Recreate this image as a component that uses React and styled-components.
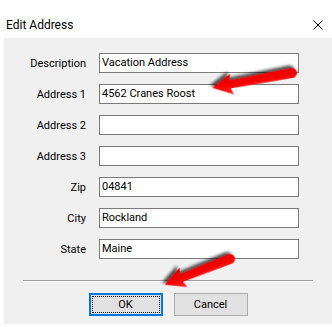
import React from "react"
import styled, { createGlobalStyle } from "styled-components"

const GlobalStyle = createGlobalStyle`
  html, body {
    margin: 0;
    padding: 0;
    background: #ffffff;
  }
  * { box-sizing: border-box; }
`

const fields = [
  { label: "Description", value: "Vacation Address" },
  { label: "Address 1", value: "4562 Cranes Roost" },
  { label: "Address 2", value: "" },
  { label: "Address 3", value: "" },
  { label: "Zip", value: "04841" },
  { label: "City", value: "Rockland" },
  { label: "State", value: "Maine" },
]

function Arrow({ x, y, length, angle, id }) {
  const head = 18
  const half = 10.5
  const shaft = 5
  const body = length - head
  return (
    <g transform={`translate(${x} ${y}) rotate(${angle})`}>
      <g filter={`url(#${id})`}>
        <path
          d={`M 0 ${-shaft} L ${body} ${-shaft + 1} L ${body - 2} ${-half} L ${length} 0 L ${body - 2} ${half} L ${body} ${shaft - 1} L 0 ${shaft} A ${shaft} ${shaft} 0 0 1 0 ${-shaft} Z`}
          fill="url(#redGrad)"
        />
      </g>
    </g>
  )
}

export default function App () {
  return (
    <>
      <GlobalStyle />
      <Window>
        <TitleBar>
          <Title>Edit Address</Title>
          <CloseIcon viewBox="0 0 10 10">
            <path d="M0.5 0.5 L9.5 9.5 M9.5 0.5 L0.5 9.5" stroke="#000" strokeWidth="1" />
          </CloseIcon>
        </TitleBar>
        <Body>
          <Form>
            {fields.map(f => (
              <React.Fragment key={f.label}>
                <Label>{f.label}</Label>
                <Field>{f.value}</Field>
              </React.Fragment>
            ))}
          </Form>
          <Separator />
          <ButtonRow>
            <Button $focused>OK</Button>
            <Button>Cancel</Button>
          </ButtonRow>
        </Body>
        <Overlay viewBox="0 0 332 327">
          <defs>
            <linearGradient id="redGrad" x1="0" y1="0" x2="0" y2="1">
              <stop offset="0" stopColor="#ff2a2a" />
              <stop offset="0.5" stopColor="#f50000" />
              <stop offset="1" stopColor="#d80000" />
            </linearGradient>
            <filter id="shadow1" x="-20%" y="-60%" width="140%" height="220%">
              <feDropShadow dx="2" dy="3" stdDeviation="1.4" floodColor="#000" floodOpacity="0.7" />
            </filter>
            <filter id="shadow2" x="-20%" y="-60%" width="140%" height="220%">
              <feDropShadow dx="2" dy="3" stdDeviation="1.4" floodColor="#000" floodOpacity="0.7" />
            </filter>
          </defs>
          <Arrow id="shadow1" x={292} y={73} length={81} angle={169.5} />
          <Arrow id="shadow2" x={230} y={259} length={70} angle={158.5} />
        </Overlay>
      </Window>
    </>
  )
}

const Window = styled.div`
  position: relative;
  width: 332px;
  height: 327px;
  background: #ffffff;
  font-family: Roboto, "Noto Sans", sans-serif;
  color: #000;
  overflow: hidden;
`

const TitleBar = styled.div`
  height: 38px;
  display: flex;
  align-items: center;
  justify-content: space-between;
  padding: 12px 9px 0 6px;
`

const Title = styled.span`
  font-size: 12px;
`

const CloseIcon = styled.svg`
  width: 10px;
  height: 10px;
  margin-top: -1px;
`

const Body = styled.div`
  margin-left: 4px;
  height: 286px;
  background: #f0f0f0;
  padding-top: 15px;
`

const Form = styled.div`
  display: grid;
  grid-template-columns: 82px 200px;
  grid-auto-rows: 20px;
  column-gap: 13px;
  row-gap: 11px;
`

const Label = styled.div`
  text-align: right;
  font-size: 11px;
  line-height: 21px;
`

const Field = styled.div`
  height: 20px;
  background: #ffffff;
  border: 1px solid #7a7a7a;
  padding: 0 2px;
  font-size: 11px;
  line-height: 18px;
  white-space: nowrap;
`

const Separator = styled.div`
  margin: 21px 19px 0 19px;
  height: 2px;
  border-top: 1px solid #a0a0a0;
  border-bottom: 1px solid #ffffff;
`

const ButtonRow = styled.div`
  display: flex;
  justify-content: center;
  gap: 11px;
  margin-top: 11px;
`

const Button = styled.div`
  width: 74px;
  height: 23px;
  display: flex;
  align-items: center;
  justify-content: center;
  font-size: 11px;
  background: #e1e1e1;
  border: ${p => (p.$focused ? "2px solid #0078d7" : "1px solid #adadad")};
  outline: ${p => (p.$focused ? "1px dotted #000" : "none")};
  outline-offset: ${p => (p.$focused ? "-4px" : "0")};
`

const Overlay = styled.svg`
  position: absolute;
  left: 0;
  top: 0;
  width: 332px;
  height: 327px;
  pointer-events: none;
`
